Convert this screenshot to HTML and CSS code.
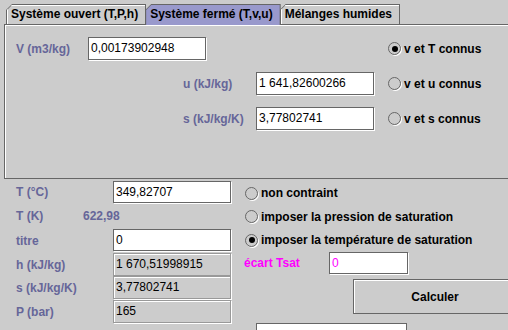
FILE: index.html
```html
<!DOCTYPE html>
<html lang="fr">
<head>
<meta charset="UTF-8">
<link rel="stylesheet" href="styles.css">
</head>
<body>

<div class="tabs">
  <div class="tab"><div class="tab-inner">Système ouvert (T,P,h)</div></div>
  <div class="tab selected"><div class="tab-inner">Système fermé (T,v,u)</div></div>
  <div class="tab"><div class="tab-inner">Mélanges humides</div></div>
</div>

<div class="panel">
  <div class="panel-grid">
    <div class="label lbl-v">V (m3/kg)</div>
    <div class="field field-v">0,00173902948</div>
    <div class="radio-row r1"><span class="radio on"></span>v et T connus</div>

    <div class="label lbl-u">u (kJ/kg)</div>
    <div class="field field-u">1 641,82600266</div>
    <div class="radio-row r2"><span class="radio"></span>v et u connus</div>

    <div class="label lbl-s">s (kJ/kg/K)</div>
    <div class="field field-s">3,77802741</div>
    <div class="radio-row r3"><span class="radio"></span>v et s connus</div>
  </div>
</div>

<div class="results">
  <div class="result-grid">
    <div class="label">T (°C)</div>
    <div class="field edit">349,82707</div>
    <div class="label">T (K)</div>
    <div class="label value">622,98</div>
    <div class="label">titre</div>
    <div class="field edit">0</div>
    <div class="label">h (kJ/kg)</div>
    <div class="field off">1 670,51998915</div>
    <div class="label">s (kJ/kg/K)</div>
    <div class="field off">3,77802741</div>
    <div class="label">P (bar)</div>
    <div class="field off">165</div>
  </div>

  <div class="options">
    <div class="radio-row opt o1"><span class="radio"></span>non contraint</div>
    <div class="radio-row opt o2"><span class="radio"></span>imposer la pression de saturation</div>
    <div class="radio-row opt o3"><span class="radio on"></span>imposer la température de saturation</div>
    <div class="ecart">
      <div class="ecart-label">écart Tsat</div>
      <div class="field ecart-field">0</div>
    </div>
    <button class="calc" type="button">Calculer</button>
    <div class="bottom-box"></div>
  </div>
</div>

</body>
</html>
```

FILE: styles.css
```css
body {
  margin: 0;
  width: 508px;
  height: 330px;
  overflow: hidden;
  background: #cccccc;
  font-family: 'Liberation Sans', Arial, sans-serif;
  font-size: 12px;
}

/* tab strip */
.tabs {
  display: flex;
  padding: 4px 0 0 6px;
  height: 20px;
}

.tab {
  background: #666666;
  padding: 1px 1px 0 1px;
  margin-right: -1px;
  clip-path: polygon(0 6px, 6px 0, 100% 0, 100% 100%, 0 100%);
}

.tab-inner {
  height: 19px;
  line-height: 19px;
  padding: 0 7px 0 4px;
  background: #cccccc;
  color: #000;
  font-weight: bold;
  clip-path: polygon(0 5px, 5px 0, 100% 0, 100% 100%, 0 100%);
  box-shadow: inset 1px 1px 0 #ffffff;
}

.tab.selected {
  padding-bottom: 1px;
  margin-bottom: -1px;
}

.tab.selected .tab-inner {
  background: #9999cc;
  box-shadow: none;
  height: 20px;
}

/* top panel, its right edge lies outside the window */
.panel {
  margin-left: 4px;
  height: 153px;
  border-top: 1px solid #666666;
  border-left: 1px solid #666666;
  border-bottom: 1px solid #666666;
  box-shadow: inset 1px 1px 0 #ffffff;
}

.panel-grid {
  display: grid;
  grid-template-columns: 72px 95px 23px 50px 118px 14px auto;
  grid-template-rows: 23px 23px 23px;
  row-gap: 12px;
  padding: 12px 0 0 11px;
  align-items: center;
}

.label {
  color: #666699;
  font-weight: bold;
  white-space: nowrap;
}

.lbl-v { grid-column: 1; grid-row: 1; }
.field-v { grid-column: 2 / 4; grid-row: 1; }
.r1 { grid-column: 7; grid-row: 1; }

.lbl-u { grid-column: 3 / 5; grid-row: 2; }
.field-u { grid-column: 5; grid-row: 2; }
.r2 { grid-column: 7; grid-row: 2; }

.lbl-s { grid-column: 3 / 5; grid-row: 3; }
.field-s { grid-column: 5; grid-row: 3; }
.r3 { grid-column: 7; grid-row: 3; }

.field {
  box-sizing: border-box;
  height: 23px;
  line-height: 21px;
  padding-left: 2px;
  background: #ffffff;
  border: 1px solid #666666;
  box-shadow: 1px 1px 0 #ffffff;
  white-space: nowrap;
  overflow: hidden;
}

/* radio buttons */
.radio-row {
  display: flex;
  align-items: center;
  font-weight: bold;
  color: #000;
  white-space: nowrap;
}

.radio {
  box-sizing: border-box;
  width: 13px;
  height: 13px;
  margin-right: 3px;
  border-radius: 50%;
  border: 1px solid #666666;
  box-shadow: 1px 1px 0 #ffffff;
  display: flex;
  align-items: center;
  justify-content: center;
}

.radio.on::after {
  content: "";
  width: 6px;
  height: 6px;
  border-radius: 50%;
  background: #000;
}

/* lower section */
.results {
  display: flex;
}

.result-grid {
  display: grid;
  grid-template-columns: 97px 118px;
  grid-template-rows: 22px 26px 24px 23px 24px 23px;
  align-items: center;
  padding: 2px 0 0 16px;
  width: 215px;
}

.result-grid .field {
  align-self: start;
}

.result-grid .edit {
  height: 22px;
  line-height: 20px;
}

.result-grid .field.off {
  background: #cccccc;
  border-color: #999999;
  box-shadow: inset 1px 1px 0 #ffffff, 1px 1px 0 #ffffff;
}

.value {
  padding-left: 1px;
  margin-left: -31px;
}

.options {
  flex: 1;
  min-width: 0;
  overflow: hidden;
  display: flex;
  flex-direction: column;
  align-items: flex-start;
  padding: 2px 0 0 13px;
}

.opt {
  padding-left: 1px;
}

.o1 { height: 24px; }
.o2 { height: 23px; }
.o3 { height: 24px; }

.ecart {
  display: flex;
  align-items: center;
  height: 22px;
}

.ecart-label {
  width: 85px;
  color: #ff00ff;
  font-weight: bold;
}

.ecart-field {
  width: 79px;
  height: 22px;
  line-height: 20px;
  color: #ff00ff;
}

.calc {
  flex-shrink: 0;
  margin: 5px 0 0 109px;
  width: 164px;
  min-width: 164px;
  height: 35px;
  background: #cccccc;
  border: 1px solid #666666;
  box-shadow: inset 1px 1px 0 #ffffff;
  font-family: 'Liberation Sans', Arial, sans-serif;
  font-size: 12px;
  font-weight: bold;
  color: #000;
  padding: 0;
}

.bottom-box {
  margin: 9px 0 0 12px;
  width: 149px;
  height: 12px;
  background: #ffffff;
  border-top: 1px solid #666666;
  border-left: 1px solid #666666;
  border-right: 1px solid #666666;
}
```
